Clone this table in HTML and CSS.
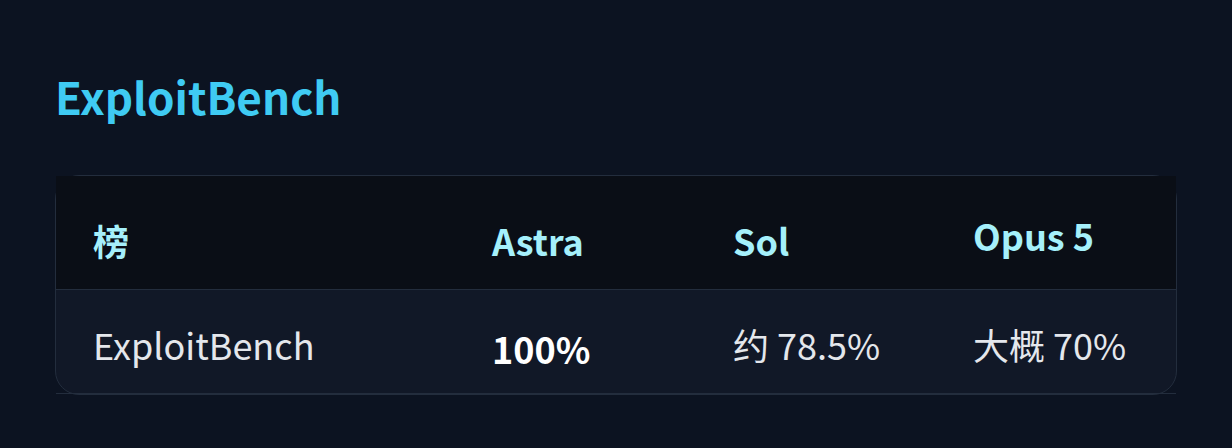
FILE: index.html
```html
<!DOCTYPE html>
<html lang="zh">

<head>
    <meta charset="UTF-8">
    <meta name="viewport" content="width=device-width, initial-scale=1.0">
    <title>ExploitBench</title>
    <link rel="stylesheet" href="styles.css">
</head>

<body>
    <div class="bench">
        <h2 class="bench_title">ExploitBench</h2>
        <table class="bench_table">
            <thead>
                <tr>
                    <th class="col_name">榜</th>
                    <th class="col_astra">Astra</th>
                    <th class="col_sol">Sol</th>
                    <th class="col_last">Opus 5</th>
                </tr>
            </thead>
            <tbody>
                <tr>
                    <td>ExploitBench</td>
                    <td class="best"><strong>100%</strong></td>
                    <td>约 78.5%</td>
                    <td>大概 70%</td>
                </tr>
            </tbody>
        </table>
    </div>
</body>

</html>
```

FILE: styles.css
```css
* {
    font-family: "Noto Sans CJK SC", "Noto Sans", sans-serif;
}

body {
    margin: 0;
    background: #0c1321;
}

.bench {
    padding: 70px 55px 54px;
}

.bench_title {
    margin: 0 0 52px;
    font-size: 44px;
    font-weight: 700;
    line-height: 1.2;
    color: #3fcbf3;
}

.bench_table {
    width: 100%;
    table-layout: fixed;
    border-collapse: separate;
    border-spacing: 0;
    border: 1px solid #232d3d;
    border-radius: 24px;
    background: #111827;
    text-align: left;
}

.bench_table th {
    background: #0a0e16;
    color: #a5f0fb;
    font-size: 36px;
    font-weight: 700;
    line-height: 52px;
    white-space: nowrap;
    padding: 38px 37px 23px;
    border-bottom: 1px solid #232d3d;
}

.bench_table td {
    color: #e4e7ec;
    font-size: 36px;
    line-height: 52px;
    white-space: nowrap;
    padding: 28px 37px 23px;
    border-bottom: 1px solid #232d3d;
}

.bench_table .col_last {
    padding-top: 33px;
    padding-bottom: 28px;
}

.bench_table .best {
    padding-top: 32px;
    padding-bottom: 19px;
}

.best strong {
    color: #fff;
}

.col_name {
    width: 325px;
}

.col_astra {
    width: 167px;
}

.col_sol {
    width: 166px;
}
```
